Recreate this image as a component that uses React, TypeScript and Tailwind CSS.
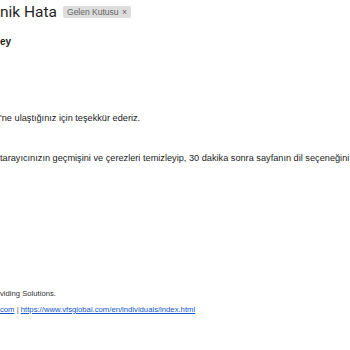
export default function App() {
  return (
    <div className="w-[350px] h-[350px] overflow-hidden bg-white text-[#222]" style={{ fontFamily: '"Liberation Sans", Arial, sans-serif' }}>
      {/* konu satırı */}
      <div className="flex items-center h-[22px] pt-[1px]">
        <h1 className="text-[15.5px] leading-[22px] text-[#1f1f1f] whitespace-nowrap" style={{ fontFamily: 'Roboto, "Open Sans", sans-serif' }}>
          nik Hata
        </h1>
        <span className="ml-[6px] bg-[#dddddd] text-[#666] rounded-[2px] px-[4px] h-[12px] leading-[12px] text-[8.5px] whitespace-nowrap">
          Gelen Kutusu <span className="ml-[1px]">×</span>
        </span>
      </div>

      {/* gövde */}
      <div className="text-[9.2px] leading-[12px] whitespace-nowrap">
        <div className="mt-[14px] font-bold text-[10px]">ey</div>
        <div className="mt-[64px]">'ne ulaştığınız için teşekkür ederiz.</div>
        <div className="mt-[28px]">
          tarayıcınızın geçmişini ve çerezleri temizleyip, 30 dakika sonra sayfanın dil seçeneğini değiştirerek tekrar deneyiniz.
        </div>
      </div>

      {/* imza */}
      <div className="mt-[125px] text-[7.7px] leading-[10px] whitespace-nowrap">
        <div className="text-[#333]">viding Solutions.</div>
        <div className="mt-[6px] text-[#1155cc]">
          <span className="underline">com</span>
          <span className="text-[#555]"> | </span>
          <span className="underline">https://www.vfsglobal.com/en/individuals/index.html</span>
        </div>
      </div>
    </div>
  );
}
